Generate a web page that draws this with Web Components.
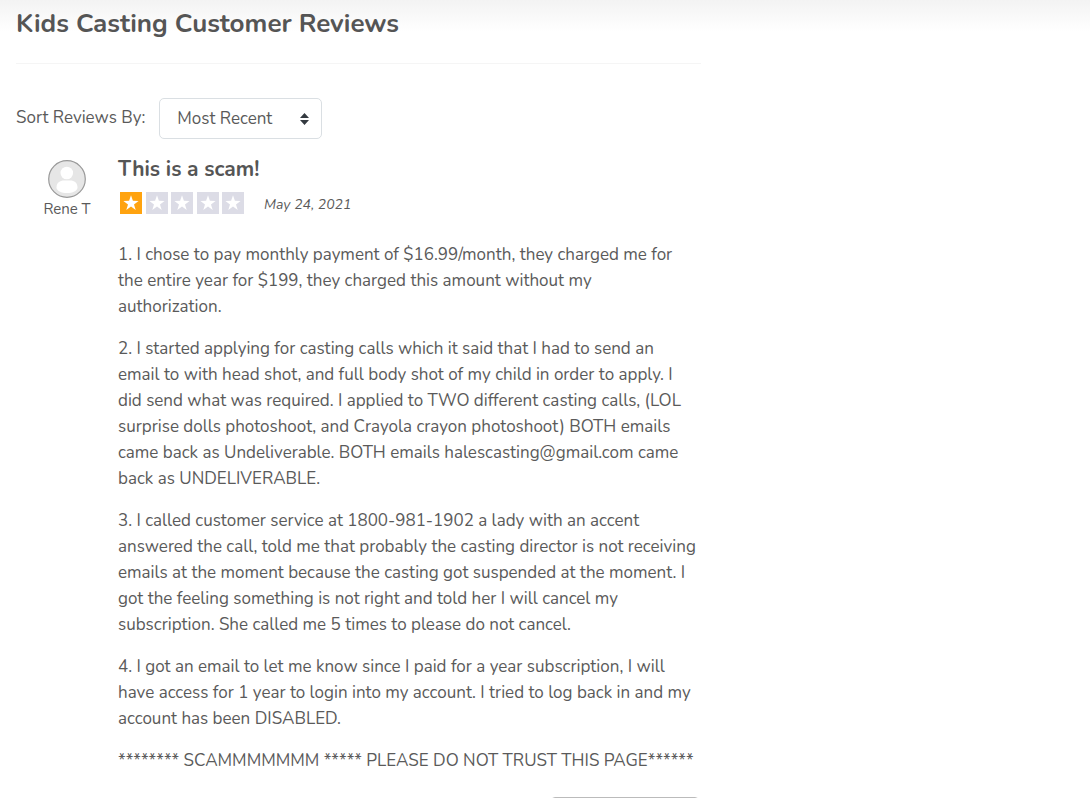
<!DOCTYPE html>
<html lang="en">
<head>
<meta charset="utf-8">
<meta name="viewport" content="width=device-width, initial-scale=1">
<title>Kids Casting Customer Reviews</title>
<style>
body { margin: 0; background: #fff; color: #5a5a5a; font-family: Nunito, Lato, sans-serif; font-size: 17px; line-height: 26px; height: 100vh; overflow: hidden; }
p { margin: 0 0 16px; }
</style>
</head>
<body>
<reviews-page>
  <review-sort></review-sort>
  <review-card author="Rene T" rating="1" date="May 24, 2021" heading="This is a scam!">
    <p>1. I chose to pay monthly payment of $16.99/month, they charged me for<br>the entire year for $199, they charged this amount without my<br>authorization.</p>
    <p>2. I started applying for casting calls which it said that I had to send an<br>email to with head shot, and full body shot of my child in order to apply. I<br>did send what was required. I applied to TWO different casting calls, (LOL<br>surprise dolls photoshoot, and Crayola crayon photoshoot) BOTH emails<br>came back as Undeliverable. BOTH emails halescasting@gmail.com came<br>back as UNDELIVERABLE.</p>
    <p>3. I called customer service at 1800-981-1902 a lady with an accent<br>answered the call, told me that probably the casting director is not receiving<br>emails at the moment because the casting got suspended at the moment. I<br>got the feeling something is not right and told her I will cancel my<br>subscription. She called me 5 times to please do not cancel.</p>
    <p>4. I got an email to let me know since I paid for a year subscription, I will<br>have access for 1 year to login into my account. I tried to log back in and my<br>account has been DISABLED.</p>
    <p>******** SCAMMMMMMM ***** PLEASE DO NOT TRUST THIS PAGE******</p>
  </review-card>
</reviews-page>
<script>
class ReviewsPage extends HTMLElement {
  connectedCallback() {
    this.attachShadow({ mode: 'open' }).innerHTML = `
      <style>
        :host { display: grid; grid-template-columns: 2fr 1fr; gap: 30px; padding: 0 16px; background: linear-gradient(#f3f3f3, #fff 32px); }
        main { min-width: 0; }
        h1 { margin: 0; padding: 8px 0 23px; border-bottom: 1px solid #f5f5f5; font-size: 26px; line-height: 32px; font-weight: 700; color: #555; }
      </style>
      <main><h1>Kids Casting Customer Reviews</h1><slot></slot></main>`;
  }
}
class ReviewSort extends HTMLElement {
  connectedCallback() {
    this.attachShadow({ mode: 'open' }).innerHTML = `
      <style>
        :host { display: flex; align-items: center; gap: 14px; margin-top: 34px; white-space: nowrap; }
        label { padding-bottom: 2px; }
        .box { display: grid; align-items: center; width: 163px; }
        select, svg { grid-area: 1 / 1; }
        select { appearance: none; width: 100%; height: 41px; padding: 0 17px; border: 1px solid #dadfe3; border-radius: 5px; background: #fff; color: inherit; font: inherit; }
        svg { justify-self: end; margin-right: 13px; pointer-events: none; }
      </style>
      <label for="order">Sort Reviews By:</label>
      <span class="box">
        <select id="order"><option>Most Recent</option></select>
        <svg width="9" height="12" viewBox="0 0 9 12" fill="#343a40"><path d="M0 5 4.500 0 9 5zM0 7h9L4.500 12z"/></svg>
      </span>`;
  }
}
class UserAvatar extends HTMLElement {
  connectedCallback() {
    this.attachShadow({ mode: 'open' }).innerHTML = `
      <style>
        :host { display: flex; flex-direction: column; align-items: center; font-size: 15px; line-height: 22px; }
      </style>
      <svg width="38" height="38" viewBox="0 0 38 38" aria-hidden="true">
        <circle cx="19" cy="19" r="18.300" fill="#e6e6e6" stroke="#999" stroke-width="1.200"/>
        <circle cx="18.800" cy="13" r="6.300" fill="#fff"/>
        <path d="M8.500 27.500C8.500 22.500 12 20.500 16 20.500h6c4.500 0 7.500 2.500 7.500 7 0 3.500-5 5.500-10.500 5.500S8.500 31 8.500 27.500z" fill="#fff"/>
      </svg>
      <slot></slot>`;
  }
}
class StarRating extends HTMLElement {
  connectedCallback() {
    const value = Number(this.getAttribute('value'));
    const star = '<path fill="#fff" d="M11 3.300 12.900 8.800 18.600 8.900 14 12.400 15.700 18 11 14.600 6.300 18 8 12.400 3.400 8.900 9.100 8.800z"/>';
    let stars = '';
    for (let i = 1; i <= 5; i++) {
      stars += `<svg width="22" height="22" viewBox="0 0 22 22"><path fill="${i <= value ? '#ffa30f' : '#dcdce6'}" d="M0 0h22v22H0z"/>${star}</svg>`;
    }
    this.setAttribute('role', 'img');
    this.setAttribute('aria-label', value + ' out of 5 stars');
    this.attachShadow({ mode: 'open' }).innerHTML = `
      <style>:host { display: flex; justify-content: space-between; width: 124px; }</style>${stars}`;
  }
}
class ReviewCard extends HTMLElement {
  connectedCallback() {
    const attr = name => this.getAttribute(name);
    this.attachShadow({ mode: 'open' }).innerHTML = `
      <style>
        :host { display: grid; grid-template-columns: 102px 1fr; margin-top: 15px; }
        user-avatar { padding-top: 6px; }
        article { min-width: 0; }
        h2 { margin: 0; font-size: 21px; line-height: 30px; font-weight: 700; color: #555; }
        .meta { display: flex; align-items: flex-start; gap: 20px; margin: 8px 0 26px; padding-left: 2px; }
        time { padding-top: 2px; font-size: 14px; line-height: 22px; font-style: italic; }
        .text { white-space: nowrap; }
        footer { display: flex; justify-content: flex-end; margin-top: 23px; padding-right: 2px; }
        button { width: 148px; height: 38px; border: 1px solid #bbb; border-radius: 4px; background: #fff; }
      </style>
      <user-avatar>${attr('author')}</user-avatar>
      <article>
        <h2>${attr('heading')}</h2>
        <div class="meta"><star-rating value="${attr('rating')}"></star-rating><time datetime="2021-05-24">${attr('date')}</time></div>
        <div class="text"><slot></slot></div>
        <footer><button type="button" aria-label="Helpful"></button></footer>
      </article>`;
  }
}
customElements.define('reviews-page', ReviewsPage);
customElements.define('review-sort', ReviewSort);
customElements.define('user-avatar', UserAvatar);
customElements.define('star-rating', StarRating);
customElements.define('review-card', ReviewCard);
</script>
</body>
</html>
